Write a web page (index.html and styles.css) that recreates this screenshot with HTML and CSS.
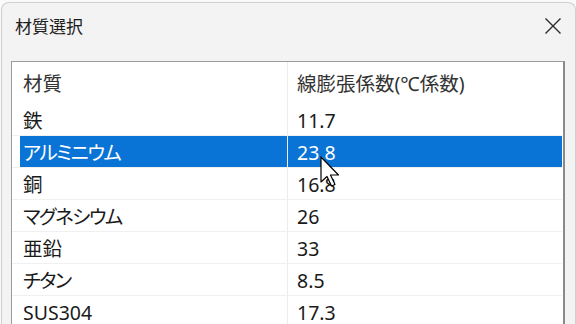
FILE: index.html
```html
<!DOCTYPE html>
<html lang="ja">
  <head>
    <meta charset="UTF-8" />
    <meta name="viewport" content="width=device-width, initial-scale=1.0" />
    <title>材質選択</title>
    <link rel="stylesheet" href="styles.css">
  </head>
  <body>
    <div class="dialog">
      <div class="titlebar">
        <span class="title">材質選択</span>
        <span class="close">
          <svg width="18" height="18" viewBox="0 0 18 18">
            <path d="M1.5 1.5 L16.5 16.5 M16.5 1.5 L1.5 16.5" stroke="#2b2b2b" stroke-width="1.4" fill="none" />
          </svg>
        </span>
      </div>
      <div class="content">
        <div class="listview">
          <div class="row head">
            <div class="cell name">材質</div>
            <div class="cell coef">線膨張係数(℃係数)</div>
          </div>
          <div class="row">
            <div class="cell name">鉄</div>
            <div class="cell coef">11.7</div>
          </div>
          <div class="row selected">
            <div class="cell name kana">アルミニウム</div>
            <div class="cell coef">23.8</div>
          </div>
          <div class="row">
            <div class="cell name">銅</div>
            <div class="cell coef">16.8</div>
          </div>
          <div class="row">
            <div class="cell name kana">マグネシウム</div>
            <div class="cell coef">26</div>
          </div>
          <div class="row">
            <div class="cell name">亜鉛</div>
            <div class="cell coef">33</div>
          </div>
          <div class="row">
            <div class="cell name kana">チタン</div>
            <div class="cell coef">8.5</div>
          </div>
          <div class="row">
            <div class="cell name">SUS304</div>
            <div class="cell coef">17.3</div>
          </div>
        </div>
      </div>
    </div>

    <!-- mouse pointer over the selected row -->
    <svg class="cursor" width="22" height="32" viewBox="0 0 22 32">
      <path d="M1 1 L1 26 L7 20.5 L11.5 30 L15 28.5 L10.5 19 L18.5 19 Z" fill="#fff" stroke="#000" stroke-width="1.2" stroke-linejoin="round" />
    </svg>
  </body>
</html>
```

FILE: styles.css
```css
* {
  margin: 0;
  padding: 0;
  box-sizing: border-box;
}
html,
body {
  height: 324px;
}
body {
  background: #fafafa;
  font-family: "Noto Sans", "Noto Sans CJK JP", sans-serif;
  color: #1a1a1a;
  overflow: hidden;
}
.dialog {
  margin: 2px 0 0 1px;
  width: 575px;
  height: 322px;
  background: #f3f3f3;
  border: 1px solid #cfcfcf;
  border-bottom: none;
  border-radius: 8px 8px 0 0;
  overflow: hidden;
}
.titlebar {
  display: flex;
  align-items: center;
  justify-content: space-between;
  height: 49px;
  padding: 0 13px 4px 13px;
}
.title {
  font-size: 17px;
  color: #1c1c1c;
}
.close {
  display: flex;
  width: 18px;
  height: 18px;
}
.content {
  padding: 9px 10px 0 9px;
}
.listview {
  background: #fff;
  border: 1px solid #9c9c9c;
  border-right: 2px solid #8a8a8a;
  border-bottom: none;
  height: 300px;
  padding-right: 1px;
}
.row {
  display: flex;
  height: 32px;
  padding-left: 8px;
  border-bottom: 1px solid #f0f0f0;
  font-size: 19.5px;
  line-height: 1;
  font-feature-settings: "palt";
}
.row.head {
  height: 42px;
  border-bottom: none;
}
.cell {
  display: flex;
  align-items: center;
  padding-top: 2px;
  white-space: nowrap;
}
.cell.name {
  width: 267px;
  padding-left: 3px;
}
.cell.kana {
  letter-spacing: -1.5px;
}
.cell.coef {
  flex: 1;
  padding-left: 9px;
  border-left: 1px solid #ececec;
}
.head .cell {
  color: #333;
}
.selected .cell {
  background: #0a74d6;
  color: #fff;
}
.cursor {
  position: absolute;
  left: 320px;
  top: 156px;
}
```
